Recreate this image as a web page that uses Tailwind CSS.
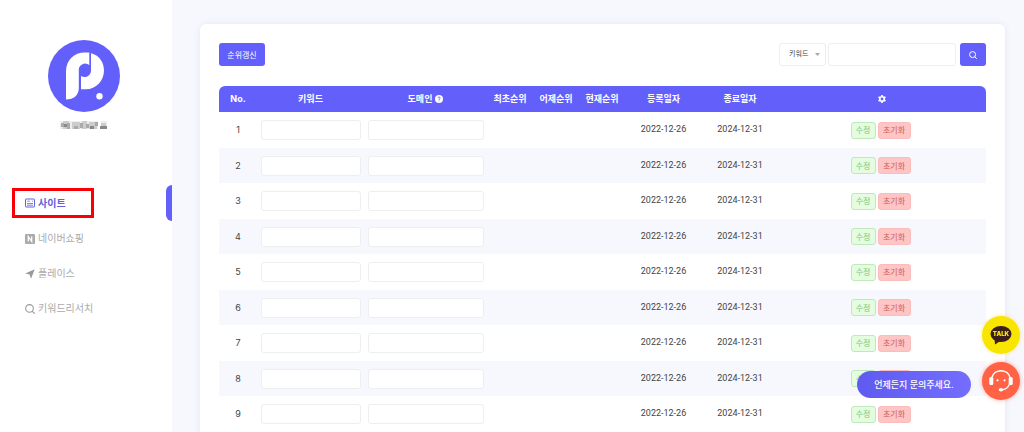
<!DOCTYPE html>
<html lang="ko">
<head>
<meta charset="utf-8">
<meta name="viewport" content="width=device-width, initial-scale=1">
<title>사이트</title>
<script src="https://cdn.jsdelivr.net/npm/@tailwindcss/browser@4"></script>
</head>
<body class="flex h-screen overflow-hidden bg-[#f7f8fe] font-['Inter','Noto_Sans_CJK_KR',sans-serif] text-[9px] text-[#444]">

<aside class="w-[172px] shrink-0 bg-white pt-10">
  <div class="flex flex-col items-center pr-1">
    <svg class="size-[72px]" viewBox="0 0 72 72" role="img" aria-label="로고">
      <circle cx="36" cy="36" r="36" fill="#625ffb"/>
      <path d="M18 59.500V31.500C18 20 26 12.500 37 12.500H41.300V25A6.500 6.500 0 0 0 30.800 31V48C30.800 55 26 59.500 18 59.500Z" fill="#fff"/>
      <path d="M43 13.200C51 15 56 22 56 30.500C56 41 48 49.300 38 49.300H33V36A6.500 6.500 0 0 0 43 30.500Z" fill="#fff"/>
      <circle cx="51.500" cy="56.300" r="3.200" fill="#fff"/>
    </svg>
    <svg class="mt-2 h-[10px] w-[48px]" viewBox="0 0 48 10" shape-rendering="crispEdges" aria-hidden="true">
      <path fill="#eee" d="M0 1h38v8H0zM41 1h6v8h-6z"/>
      <path fill="#ccc" d="M3 1h6v8H3zM12 2h8v7h-8zM22 1h5v8h-5zM29 2h8v7h-8zM41 3h5v3h-5z"/>
      <path fill="#aaa" d="M1 3h3v4H1zM7 3h3v6H7zM14 6h4v3h-4zM20 3h3v5h-3zM26 4h3v4h-3zM35 2h3v4h-3z"/>
      <path fill="#888" d="M4 4h3v3H4zM30 6h4v3h-4zM40 6h7v3h-7z"/>
    </svg>
  </div>

  <nav class="mt-[55px]">
    <ul class="text-[10px] text-[#aaa]">
      <li class="relative">
        <a href="#" aria-current="page" class="flex h-9 items-center gap-[3px] pl-[25px] font-bold text-[#625fdc]">
          <svg class="size-[10px]" viewBox="0 0 10 10" fill="none" stroke="currentColor" stroke-width="1"><rect x=".5" y="1" width="9" height="8" rx=".5"/><path d="M2 3.200h3M7 3.200h1" stroke-width=".7"/><path d="M2 5.500h6M2 7.200h6" stroke-width=".8"/></svg>
          사이트
        </a>
        <span class="absolute inset-y-0 right-0 w-[6px] rounded-l-md bg-[#625ffb]"></span>
        <span class="pointer-events-none absolute top-[3px] left-3 h-[30px] w-[82px] border-[3px] border-[#f90007]"></span>
      </li>
      <li><a href="#" class="flex h-[35px] items-center gap-[3px] pl-[25px]">
        <svg class="size-[10px]" viewBox="0 0 10 10"><rect width="10" height="10" rx="1" fill="#aaa"/><path d="M3.300 7.500V2.500L6.700 7.500V2.500" fill="none" stroke="#fff" stroke-width="1.300"/></svg>
        네이버쇼핑</a></li>
      <li><a href="#" class="flex h-[35px] items-center gap-[3px] pl-[25px]">
        <svg class="size-[10px]" viewBox="0 0 10 10"><path d="M9.700.3 6 9.700 4.600 5.400.3 4.600Z" fill="#999"/></svg>
        플레이스</a></li>
      <li><a href="#" class="flex h-[35px] items-center gap-[3px] pl-[25px]">
        <svg class="size-[10px]" viewBox="0 0 10 10" fill="none" stroke="#999" stroke-width="1.100"><circle cx="4.500" cy="4.400" r="3.800"/><path d="M7.200 7.200 9.700 9.700"/></svg>
        키워드리서치</a></li>
    </ul>
  </nav>
</aside>

<main class="min-w-0 grow overflow-hidden pt-6 pr-[19px] pl-7">
  <section class="min-h-screen rounded-md bg-white px-[19px] pt-[19px] pb-10 shadow-[0_0_6px_rgba(90,95,160,0.12)]">
    <div class="flex items-center justify-between">
      <button type="button" class="h-[23px] w-[46px] rounded-[3px] bg-[#625ffb] text-[8px] text-white">순위갱신</button>
      <form class="flex items-center" onsubmit="return false">
        <div class="relative">
          <select aria-label="검색 조건" class="h-[23px] w-[47px] appearance-none rounded-[3px] border border-[#eee] bg-white pl-[9px] text-[7px] text-[#444]"><option>키워드</option></select>
          <svg class="pointer-events-none absolute top-[10px] right-[6px] h-[3px] w-[5px]" viewBox="0 0 5 3"><path d="M0 0h5L2.500 3Z" fill="#aaa"/></svg>
        </div>
        <input type="search" aria-label="검색어" class="ml-[2px] h-[23px] w-32 rounded-[3px] border border-[#eee] bg-white px-2">
        <button type="submit" aria-label="검색" class="ml-1 flex h-[23px] w-[26px] items-center justify-center rounded-[3px] bg-[#625ffb]">
          <svg class="size-2" viewBox="0 0 8 8" fill="none" stroke="#fff" stroke-width="1"><circle cx="3.600" cy="3.600" r="3"/><path d="M5.800 5.800 7.800 7.800"/></svg>
        </button>
      </form>
    </div>

    <table class="mt-5 w-full table-fixed border-separate border-spacing-0 text-center">
      <colgroup>
        <col class="w-[38px]"><col class="w-[107px]"><col class="w-[123px]"><col class="w-[46px]"><col class="w-[46px]"><col class="w-[46px]"><col class="w-[77px]"><col class="w-[76px]"><col>
      </colgroup>
      <thead class="text-white">
        <tr class="h-[26px] *:p-0 *:font-bold *:bg-[#625ffb]">
          <th scope="col" class="rounded-tl-md">No.</th>
          <th scope="col">키워드</th>
          <th scope="col"><span class="inline-flex items-center gap-[3px]">도메인
            <svg class="size-2" viewBox="0 0 8 8"><circle cx="4" cy="4" r="4" fill="#fff"/><path d="M2.900 3.100C3 1.600 5.200 1.700 5.100 3.100 5 3.900 4 3.900 4 4.900M4 5.600v.8" fill="none" stroke="#625ffb" stroke-width=".9"/></svg></span></th>
          <th scope="col">최초순위</th>
          <th scope="col">어제순위</th>
          <th scope="col">현재순위</th>
          <th scope="col">등록일자</th>
          <th scope="col">종료일자</th>
          <th scope="col" class="rounded-tr-md" aria-label="관리">
            <svg class="mx-auto size-2" viewBox="0 0 8 8" fill="none" stroke="#fff"><circle cx="4" cy="4" r="2.200" stroke-width="1.600"/><path d="M4 0v1.500M4 6.500V8M.54 2l1.300.75M6.160 5.250 7.460 6M.54 6l1.300-.75M6.160 2.750 7.460 2" stroke-width="1.700"/></svg>
          </th>
        </tr>
      </thead>
      <tbody id="rows"></tbody>
    </table>
  </section>
</main>

<button type="button" class="fixed right-[53px] bottom-[34px] h-[27px] w-[114px] rounded-full bg-linear-to-r from-[#5f5bf0] to-[#746dff] text-[9px] font-medium text-white">언제든지 문의주세요.</button>
<div class="fixed right-1 bottom-8 flex flex-col gap-2">
  <a href="#" aria-label="카카오톡 상담" class="relative flex size-[38px] items-center justify-center rounded-full bg-[#f8e600] shadow-[0_0_4px_rgba(248,200,0,0.4)]">
    <svg class="size-[22px]" viewBox="0 0 22 22"><ellipse cx="11" cy="10" rx="10.500" ry="8" fill="#3b1e1e"/><path d="M4.500 14 5 20.500 11 16.500Z" fill="#3b1e1e"/></svg>
    <span class="absolute inset-x-0 top-[13px] text-center text-[6px] leading-[10px] font-black text-[#f8e600]">TALK</span>
  </a>
  <a href="#" aria-label="고객센터" class="flex size-[38px] items-center justify-center rounded-full bg-[#ff6245] shadow-[0_0_4px_rgba(255,80,50,0.5)]">
    <svg class="size-6" viewBox="0 0 24 24" fill="none" stroke="#fff"><path d="M3 8.500C5 -.5 19 -.5 21 8.500" stroke-width="1.400"/><path d="M20.500 15C19 19 16 20.700 12.500 20.800" stroke-width="1.200"/><rect x=".3" y="8" width="4" height="8" rx="1.500" fill="#fff" stroke="none"/><rect x="19.700" y="8" width="4" height="8" rx="1.500" fill="#fff" stroke="none"/><ellipse cx="12" cy="20.800" rx="2.200" ry="1.700" fill="#fff" stroke="none"/><circle cx="8.500" cy="11.300" r="1.100" fill="#fff" stroke="none"/><circle cx="15.500" cy="11.300" r="1.100" fill="#fff" stroke="none"/></svg>
  </a>
</div>

<template id="row">
  <tr class="h-9 *:p-0 even:h-[35px] even:bg-[#f7f8fe]">
    <td data-no></td>
    <td><input type="text" aria-label="키워드" class="mx-auto block h-5 w-[100px] rounded-[3px] border border-[#eee] bg-white px-1"></td>
    <td><input type="text" aria-label="도메인" class="mx-auto block h-5 w-[116px] rounded-[3px] border border-[#eee] bg-white px-1"></td>
    <td></td><td></td><td></td>
    <td class="font-[Roboto]">2022-12-26</td>
    <td class="font-[Roboto]">2024-12-31</td>
    <td>
      <div class="flex justify-center gap-[2px] pr-[3px] text-[8px]">
        <button type="button" class="h-[17px] w-[25px] rounded-[3px] border border-[#bfe8bb] bg-[#e4fde1] leading-none text-[#7fc47a]">수정</button>
        <button type="button" class="h-[17px] w-[33px] rounded-[3px] border border-[#fbbcbc] bg-[#fec5c5] leading-none text-[#d0605f]">초기화</button>
      </div>
    </td>
  </tr>
</template>
<script>
  const template = document.getElementById('row');
  const body = document.getElementById('rows');
  for (let n = 1; n <= 9; n++) {
    const row = template.content.cloneNode(true);
    row.querySelector('[data-no]').textContent = n;
    body.appendChild(row);
  }
</script>
</body>
</html>
